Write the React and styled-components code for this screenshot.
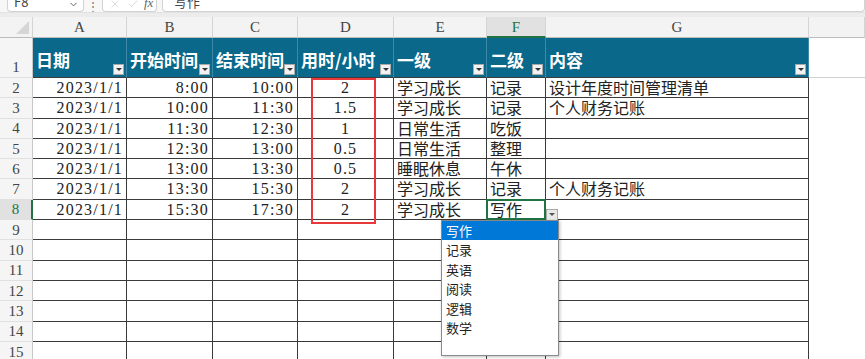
import React from "react";
import styled, { createGlobalStyle } from "styled-components";
import { X, Check, ChevronDown } from "lucide-react";

const GlobalStyle = createGlobalStyle`
  html, body {
    margin: 0;
    padding: 0;
    background: #fff;
  }
  body {
    font-family: "Noto Sans CJK SC", "Noto Sans", sans-serif;
    overflow: hidden;
  }
`;

const CJK = `"Noto Sans CJK SC", "Noto Sans", sans-serif`;
const SERIF = `"Liberation Serif", "Noto Sans CJK SC", serif`;

const Page = styled.div`
  width: 865px;
  height: 359px;
  overflow: hidden;
  background: #fff;
`;

const FormulaBar = styled.div`
  height: 12px;
  background: #f7f7f7;
  display: flex;
  align-items: flex-end;
  padding-left: 7px;
  overflow: hidden;
`;

const Box = styled.div`
  height: 22px;
  width: ${(p) => p.$w || "auto"};
  flex: ${(p) => (p.$grow ? 1 : "none")};
  background: #fff;
  border: 1px solid #d2d2d2;
  border-top: none;
  border-radius: 0 0 4px 4px;
  box-sizing: border-box;
  display: flex;
  align-items: flex-end;
  padding: 0 4px 0 6px;
  font-size: 13px;
  color: #555;
  line-height: 14px;
  margin-left: ${(p) => p.$ml || "0"};
`;

const BoxText = styled.span`
  flex: 1;
  font-family: ${CJK};
  color: #444;
  padding-left: ${(p) => p.$pl || "0"};
  transform: translateY(-2px);
`;

const Sep = styled.span`
  width: 18px;
  text-align: center;
  color: #777;
  font-size: 12px;
  line-height: 12px;
  align-self: center;
`;

const IconRow = styled.div`
  display: flex;
  align-items: flex-end;
  gap: 6px;
  color: #c4c4c4;
  padding-bottom: 1px;
`;

const Fx = styled.span`
  font-family: ${SERIF};
  font-style: italic;
  color: #666;
  font-size: 13px;
  margin-left: 5px;
  padding-bottom: 1px;
`;

const Band = styled.div`
  height: 5px;
  background: #ececec;
  border-top: 1px solid #e2e2e2;
  box-sizing: border-box;
`;

const Sheet = styled.div`
  position: relative;
  display: grid;
  grid-template-columns: 33px 94px 86px 85px 96px 93px 59px 263px 1fr;
  grid-template-rows: 21px 40px;
  grid-auto-rows: 20.3px;
`;

const Corner = styled.div`
  position: relative;
  background: #f3f3f3;
  border-right: 1px solid #d4d4d4;
  border-bottom: 1px solid #bcbcbc;
  box-sizing: border-box;
  &::after {
    content: "";
    position: absolute;
    right: 3px;
    bottom: 3px;
    border-left: 13px solid transparent;
    border-bottom: 13px solid #d6d6d6;
  }
`;

const ColHead = styled.div`
  background: ${(p) => (p.$active ? "#e1e1e1" : "#f3f3f3")};
  color: ${(p) => (p.$active ? "#217346" : "#444")};
  border-right: 1px solid #d4d4d4;
  border-bottom: ${(p) => (p.$active ? "2px solid #217346" : "1px solid #bcbcbc")};
  box-sizing: border-box;
  font-family: ${SERIF};
  font-size: 15px;
  display: flex;
  align-items: center;
  justify-content: center;
  padding-top: 1px;
`;

const RowHead = styled.div`
  background: ${(p) => (p.$active ? "#e1e1e1" : "#f5f5f5")};
  color: ${(p) => (p.$active ? "#217346" : "#444")};
  border-right: ${(p) => (p.$active ? "2px solid #217346" : "1px solid #c8c8c8")};
  border-bottom: 1px solid #e0e0e0;
  box-sizing: border-box;
  font-family: ${SERIF};
  font-size: 15px;
  line-height: 18px;
  display: flex;
  align-items: ${(p) => (p.$tall ? "flex-end" : "center")};
  justify-content: center;
  padding-bottom: ${(p) => (p.$tall ? "1px" : "0")};
`;

const HeadCell = styled.div`
  position: relative;
  background: #0a688b;
  color: #fff;
  border-right: 1px solid #3f88aa;
  border-bottom: 1px solid #3c3c3c;
  box-sizing: border-box;
  font-family: ${CJK};
  font-weight: 700;
  font-size: 17px;
  line-height: 22px;
  display: flex;
  align-items: flex-end;
  padding: 0 0 6px 3px;
  white-space: nowrap;
`;

const BlankHead = styled.div`
  border-bottom: 1px solid #d0d0d0;
  background: #fff;
`;

const FilterBtn = styled.span`
  position: absolute;
  right: 2px;
  bottom: 2px;
  width: 11px;
  height: 11px;
  box-sizing: border-box;
  background: #f2f2f2;
  border: 1px solid #a9a9a9;
  display: flex;
  align-items: center;
  justify-content: center;
  &::after {
    content: "";
    border-left: 3px solid transparent;
    border-right: 3px solid transparent;
    border-top: 3px solid #333;
  }
`;

const Cell = styled.div`
  position: relative;
  border-right: ${(p) => (p.$outside ? "none" : "1px solid #3a3a3a")};
  border-bottom: ${(p) => (p.$outside ? "none" : "1px solid #3a3a3a")};
  box-sizing: border-box;
  color: #222;
  font-family: ${(p) => (p.$num ? SERIF : CJK)};
  font-size: 16px;
  letter-spacing: ${(p) => (p.$num ? "1.2px" : "0")};
  line-height: 19px;
  padding: 0 3px;
  text-align: ${(p) => p.$align || "left"};
  white-space: nowrap;
`;

const RedFrame = styled.div`
  position: absolute;
  left: 311px;
  top: 61px;
  width: 65px;
  height: 146px;
  border: 2px solid #e8383a;
  box-sizing: border-box;
  pointer-events: none;
`;

const ActiveFrame = styled.div`
  position: absolute;
  left: -1px;
  top: -1px;
  right: -1px;
  bottom: -1px;
  border: 2px solid #217346;
  pointer-events: none;
`;

const DropBtn = styled.span`
  position: absolute;
  left: calc(100% + 1px);
  top: 9px;
  width: 12px;
  height: 12px;
  box-sizing: border-box;
  background: #e9e9e9;
  border: 1px solid #a8a8a8;
  display: flex;
  align-items: center;
  justify-content: center;
  z-index: 3;
  &::after {
    content: "";
    border-left: 3px solid transparent;
    border-right: 3px solid transparent;
    border-top: 3px solid #555;
  }
`;

const DropList = styled.ul`
  position: absolute;
  left: -46px;
  top: calc(100% + 1px);
  width: 118px;
  height: 136px;
  margin: 0;
  padding: 0;
  list-style: none;
  background: #fff;
  border: 1px solid #8a8a8a;
  box-sizing: border-box;
  box-shadow: 1px 1px 3px rgba(0, 0, 0, 0.25);
  z-index: 4;
`;

const DropItem = styled.li`
  height: ${(p) => (p.$active ? "19px" : "19.5px")};
  line-height: 19px;
  padding-left: 4px;
  font-family: ${CJK};
  font-size: 13px;
  letter-spacing: 0;
  color: ${(p) => (p.$active ? "#fff" : "#222")};
  background: ${(p) => (p.$active ? "#0078d7" : "transparent")};
`;

const headers = ["日期", "开始时间", "结束时间", "用时/小时", "一级", "二级", "内容"];
const letters = ["A", "B", "C", "D", "E", "F", "G"];

const rows = [
  ["2023/1/1", "8:00", "10:00", "2", "学习成长", "记录", "设计年度时间管理清单"],
  ["2023/1/1", "10:00", "11:30", "1.5", "学习成长", "记录", "个人财务记账"],
  ["2023/1/1", "11:30", "12:30", "1", "日常生活", "吃饭", ""],
  ["2023/1/1", "12:30", "13:00", "0.5", "日常生活", "整理", ""],
  ["2023/1/1", "13:00", "13:30", "0.5", "睡眠休息", "午休", ""],
  ["2023/1/1", "13:30", "15:30", "2", "学习成长", "记录", "个人财务记账"],
  ["2023/1/1", "15:30", "17:30", "2", "学习成长", "写作", ""],
];

const options = ["写作", "记录", "英语", "阅读", "逻辑", "数学"];

const aligns = ["right", "right", "right", "center", "left", "left", "left"];

const App = () => {
  const body = [...rows];
  while (body.length < 14) body.push(["", "", "", "", "", "", ""]);

  return (
    <Page>
      <GlobalStyle />
      <FormulaBar>
        <Box $w="77px">
          <BoxText>F8</BoxText>
          <ChevronDown size={11} color="#555" style={{ marginBottom: 1 }} />
        </Box>
        <Sep>⋮</Sep>
        <Box $w="55px">
          <IconRow>
            <X size={12} strokeWidth={1.2} />
            <Check size={12} strokeWidth={1.2} />
          </IconRow>
          <Fx>fx</Fx>
        </Box>
        <Box $grow $ml="5px">
          <BoxText $pl="5px">写作</BoxText>
        </Box>
      </FormulaBar>
      <Band />
      <Sheet>
        <Corner />
        {letters.map((l) => (
          <ColHead key={l} $active={l === "F"}>
            {l}
          </ColHead>
        ))}
        <ColHead />

        <RowHead $tall>1</RowHead>
        {headers.map((h) => (
          <HeadCell key={h}>
            {h}
            <FilterBtn />
          </HeadCell>
        ))}
        <BlankHead />

        {body.map((r, i) => (
          <React.Fragment key={i}>
            <RowHead $active={i === 6}>{i + 2}</RowHead>
            {r.map((v, j) => {
              const active = i === 6 && j === 5;
              return (
                <Cell key={j} $align={aligns[j]} $num={j < 4}>
                  {v}
                  {active && (
                    <>
                      <ActiveFrame />
                      <DropBtn />
                      <DropList>
                        {options.map((o, k) => (
                          <DropItem key={o} $active={k === 0}>
                            {o}
                          </DropItem>
                        ))}
                      </DropList>
                    </>
                  )}
                </Cell>
              );
            })}
            <Cell $outside />
          </React.Fragment>
        ))}
        <RedFrame />
      </Sheet>
    </Page>
  );
};

export default App;
